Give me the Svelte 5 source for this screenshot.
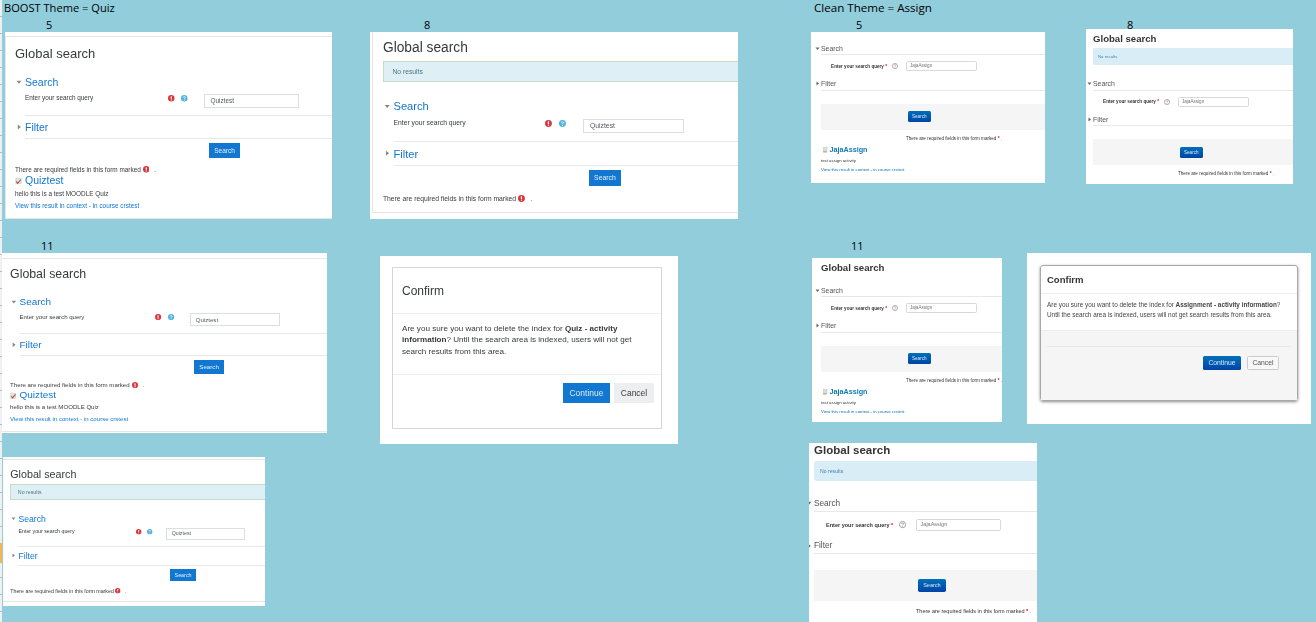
<script>
  // each pane is one pasted screenshot; z is how much it was scaled when pasted
  const notes = [
    { text: 'BOOST Theme = Quiz', x: 4, y: 0, size: 11.1 },
    { text: '5', x: 46, y: 17, size: 11 },
    { text: '8', x: 424, y: 17, size: 11 },
    { text: '11', x: 41, y: 238, size: 11 },
    { text: 'Clean Theme = Assign', x: 814, y: 0, size: 11.6 },
    { text: '5', x: 856, y: 17, size: 11 },
    { text: '8', x: 1127, y: 17, size: 11 },
    { text: '11', x: 851, y: 238, size: 11 }
  ];

  const boost = [
    { x: 5, y: 32, w: 327, h: 187, z: 1, ox: 0, top: 4, alert: false, result: true },
    { x: 370, y: 32, w: 368, h: 187, z: 1.06, ox: 2.4, top: -2, alert: true, result: false },
    { x: 2, y: 253, w: 325, h: 180, z: 0.95, ox: -1.5, top: 5.2, alert: false, result: true },
    { x: 3, y: 457, w: 262, h: 149, z: 0.825, ox: -1.2, top: 2.6, alert: true, result: false }
  ];

  const clean = [
    { x: 811, y: 32, w: 234, h: 151, z: 1, ox: 0, top: 11, title: false, alert: false, result: true },
    { x: 1086, y: 29, w: 207, h: 155, z: 1, ox: -3, top: 3, title: true, alert: true, result: false },
    { x: 812, y: 258, w: 190, h: 164, z: 1, ox: -1, top: 3, title: true, alert: false, result: true },
    { x: 809, y: 443, w: 228, h: 179, z: 1.2, ox: -7, top: -1.2, title: true, alert: true, result: false }
  ];

  const box = (p) => `left:${p.x}px;top:${p.y}px;width:${p.w}px;height:${p.h}px`;
  const scaled = (p) => `zoom:${p.z};margin-left:${p.ox / p.z}px;padding-top:${Math.max(p.top, 0)}px;margin-top:${Math.min(p.top, 0)}px`;
</script>

{#snippet caretDown(color)}
  <svg class="caret" viewBox="0 0 10 10" style="color:{color}"><path d="M1 3h8L5 8z" fill="currentColor" /></svg>
{/snippet}

{#snippet caretRight(color)}
  <svg class="caret" viewBox="0 0 10 10" style="color:{color}"><path d="M3 1v8l5-4z" fill="currentColor" /></svg>
{/snippet}

{#snippet required()}
  <svg class="ico" viewBox="0 0 12 12"><circle cx="6" cy="6" r="6" fill="#d9363e" /><rect x="4.9" y="2.2" width="2.2" height="5" rx="1" fill="#fff" /><circle cx="6" cy="9.1" r="1.1" fill="#fff" /></svg>
{/snippet}

{#snippet help()}
  <svg class="ico" viewBox="0 0 12 12"><circle cx="6" cy="6" r="6" fill="#4fb3dc" /><path d="M4 4.6C4 2.6 8 2.6 8 4.6 8 6 6 5.8 6 7.4" fill="none" stroke="#fff" stroke-width="1.5" /><circle cx="6" cy="9.3" r="1" fill="#fff" /></svg>
{/snippet}

{#snippet helpOutline()}
  <svg class="ico-clean" viewBox="0 0 12 12"><circle cx="6" cy="6" r="5.2" fill="none" stroke="#777" stroke-width="1.1" /><path d="M4.2 4.7C4.2 3 7.8 3 7.8 4.7 7.8 5.9 6 5.8 6 7.2" fill="none" stroke="#777" stroke-width="1.1" /><circle cx="6" cy="8.9" r=".8" fill="#777" /></svg>
{/snippet}

{#snippet quizIcon()}
  <svg class="quiz-ico" viewBox="0 0 12 12"><rect x="1.5" y="1" width="9" height="10" fill="#dbe4ee" stroke="#aab6c4" stroke-width=".6" /><path d="M2 6.5l2.6 3.4L10 3.4" fill="none" stroke="#c9502a" stroke-width="1.9" /></svg>
{/snippet}

{#snippet assignIcon()}
  <svg class="assign-ico" viewBox="0 0 12 12"><rect x="3" y="1" width="7" height="7.5" fill="#d6dfe8" stroke="#9fb0c0" stroke-width=".7" /><path d="M1.5 8.5h8.6l-.9 2.7H2.6z" fill="#d8a05c" /></svg>
{/snippet}

<div class="canvas">
  <div class="gutter"></div>
  <div class="gutter-mark"></div>

  {#each notes as n}
    <span class="note" style="left:{n.x}px;top:{n.y}px;font-size:{n.size}px">{n.text}</span>
  {/each}

  {#each boost as p}
    <div class="pane" style={box(p)}>
      <div class="page boost" style={scaled(p)}>
        <div class="card">
          <h2>Global search</h2>
          {#if p.alert}
            <div class="alert">No results</div>
          {/if}
          <div class="legend" class:after-alert={p.alert}>
            {@render caretDown('#888')}
            <span>Search</span>
          </div>
          <div class="fields">
            <span class="label">Enter your search query</span>
            <span class="icons">{@render required()}{@render help()}</span>
            <span class="input">Quiztest</span>
          </div>
          <div class="legend second">
            {@render caretRight('#888')}
            <span>Filter</span>
          </div>
          <div class="rule"></div>
          <div class="actions"><span class="btn">Search</span></div>
          <div class="marked">There are required fields in this form marked {@render required()} <i>.</i></div>
          {#if p.result}
            <div class="result">{@render quizIcon()}<span>Quiztest</span></div>
            <div class="desc">hello this is a test MOODLE Quiz</div>
            <div class="ctx">View this result in context - in course crstest</div>
          {/if}
        </div>
      </div>
    </div>
  {/each}

  {#each clean as p}
    <div class="pane" style={box(p)}>
      <div class="page clean" style={scaled(p)}>
        {#if p.title}
          <h2>Global search</h2>
        {/if}
        {#if p.alert}
          <div class="alert">No results</div>
        {/if}
        <div class="legend" class:after-title={p.title && !p.alert} class:after-alert={p.alert}>
          {@render caretDown('#666')}
          <span>Search</span>
        </div>
        <div class="fields">
          <span class="label">Enter your search query <b>*</b></span>
          {@render helpOutline()}
          <span class="input">JajaAssign</span>
        </div>
        <div class="legend second">
          {@render caretRight('#666')}
          <span>Filter</span>
        </div>
        <div class="rule"></div>
        <div class="actions"><span class="btn">Search</span></div>
        <div class="marked">There are required fields in this form marked <b>*</b> .</div>
        {#if p.result}
          <div class="result">{@render assignIcon()}<span>JajaAssign</span></div>
          <div class="desc">test assign activity</div>
          <div class="ctx">View this result in context - in course crstest</div>
        {/if}
      </div>
    </div>
  {/each}

  <div class="pane confirm-boost">
    <div class="dialog">
      <h3>Confirm</h3>
      <p>Are you sure you want to delete the index for <b>Quiz - activity information</b>? Until the search area is indexed, users will not get search results from this area.</p>
      <div class="foot">
        <span class="go">Continue</span>
        <span class="no">Cancel</span>
      </div>
    </div>
  </div>

  <div class="pane confirm-clean">
    <div class="dialog">
      <h3>Confirm</h3>
      <p>Are you sure you want to delete the index for <b>Assignment - activity information</b>? Until the search area is indexed, users will not get search results from this area.</p>
      <div class="foot">
        <div class="foot-row">
          <span class="go">Continue</span>
          <span class="no">Cancel</span>
        </div>
      </div>
    </div>
  </div>
</div>

<style>
  :global(body) {
    margin: 0;
    background: #92cddc;
  }

  .canvas {
    position: relative;
    width: 1316px;
    height: 622px;
    overflow: hidden;
    background: #92cddc;
    font-family: "Liberation Sans", Arial, sans-serif;
  }

  .gutter {
    position: absolute;
    left: 0;
    top: 0;
    bottom: 0;
    width: 1.5px;
    background: repeating-linear-gradient(#eef0f2 0 16px, #b8bcc0 16px 17px);
  }

  .gutter-mark {
    position: absolute;
    left: 0;
    top: 543px;
    width: 1.5px;
    height: 20px;
    background: #f2b84b;
  }

  .note {
    position: absolute;
    font-family: "Open Sans", "Noto Sans", sans-serif;
    line-height: 16px;
    color: #000;
    white-space: nowrap;
  }

  .pane {
    position: absolute;
    overflow: hidden;
    background: #fff;
  }

  .page,
  .dialog {
    filter: blur(0.4px);
  }

  .page {
    width: 560px;
  }

  /* boost screenshots */
  .boost {
    color: #373a3c;
  }

  .card {
    box-sizing: border-box;
    padding: 9px 0 8px 9px;
    border: 1px solid #e6e6e6;
    border-width: 1.5px 0 1.5px 1px;
  }

  .boost h2 {
    margin: 0;
    font-size: 13px;
    font-weight: 400;
    line-height: 16px;
  }

  .boost .alert {
    box-sizing: border-box;
    height: 20px;
    margin-top: 3.4px;
    padding-left: 8px;
    border: 1px solid #c6dcc4;
    background: #def0f6;
    font-size: 6.4px;
    line-height: 18px;
    color: #4e7482;
  }

  .boost .legend {
    display: flex;
    align-items: center;
    height: 12px;
    margin-top: 14px;
    font-size: 10.5px;
    color: #1177d1;
  }

  .boost .legend.after-alert {
    margin-top: 16.4px;
  }

  .boost .legend.second {
    margin-top: 5px;
  }

  .caret {
    flex: none;
    width: 6px;
    height: 6px;
  }

  .boost .caret {
    margin: 0 3px 0 1px;
  }

  .boost .fields {
    display: flex;
    align-items: flex-start;
    margin: 6px 0 0 10px;
    padding-bottom: 7px;
    border-bottom: 1px solid #e8e8e8;
    font-size: 6.4px;
  }

  .boost .label {
    width: 143px;
    line-height: 8px;
  }

  .icons {
    display: flex;
    gap: 6.5px;
    width: 36px;
    margin-top: 1px;
  }

  .ico {
    width: 6.5px;
    height: 6.5px;
  }

  .boost .input {
    box-sizing: border-box;
    width: 95px;
    height: 14px;
    padding-left: 5.5px;
    border: 1px solid #dcdfe2;
    line-height: 12px;
    color: #55595c;
  }

  .boost .rule {
    height: 1px;
    margin: 5px 0 0 10px;
    background: #e8e8e8;
  }

  .boost .actions {
    margin: 4px 0 0 194px;
  }

  .boost .btn {
    display: block;
    width: 31px;
    height: 15px;
    background: #1177d1;
    color: #e6f1fb;
    font-size: 6.5px;
    line-height: 15px;
    text-align: center;
  }

  .boost .marked {
    display: flex;
    align-items: center;
    gap: 2px;
    height: 9px;
    margin-top: 7px;
    font-size: 6.4px;
  }

  .marked i {
    margin-left: 3px;
    font-style: normal;
  }

  .boost .result {
    display: flex;
    align-items: center;
    height: 12px;
    font-size: 10.5px;
    color: #1177d1;
  }

  .quiz-ico {
    width: 7px;
    height: 8px;
    margin: 2px 3px 0 0;
  }

  .boost .desc,
  .boost .ctx {
    height: 9px;
    margin-top: 3px;
    font-size: 6.4px;
    line-height: 9px;
  }

  .boost .ctx {
    color: #1177d1;
  }

  /* clean screenshots */
  .clean {
    color: #333;
  }

  .clean h2 {
    margin: 0 0 0 10px;
    font-size: 9.6px;
    font-weight: 700;
    line-height: 14px;
  }

  .clean .alert {
    box-sizing: border-box;
    height: 17px;
    margin: 2px 0 0 10px;
    padding-left: 5px;
    border-radius: 2px;
    background: #d9edf7;
    font-size: 4.3px;
    line-height: 17px;
    color: #3a87ad;
  }

  .clean .legend {
    display: flex;
    align-items: center;
    box-sizing: content-box;
    height: 10px;
    font-size: 6.9px;
    color: #555;
    padding-bottom: 2px;
    position: relative;
  }

  .clean .legend::after {
    content: "";
    position: absolute;
    left: 10px;
    right: 0;
    bottom: 0;
    height: 1px;
    background: #e8e8e8;
  }

  .clean .legend.after-title {
    margin-top: 10px;
  }

  .clean .legend.after-alert {
    margin-top: 13.5px;
  }

  .clean .legend.second {
    margin-top: 7.5px;
  }

  .clean .caret {
    width: 5px;
    height: 5px;
    margin: 0 0 0 3.5px;
    padding-right: 1.5px;
  }

  .clean .fields {
    display: flex;
    align-items: center;
    margin-top: 6px;
    height: 10px;
    font-size: 4.6px;
  }

  .clean .label {
    width: 66px;
    margin-left: 10px;
    font-weight: 700;
    text-align: right;
    white-space: nowrap;
  }

  .clean b {
    color: #e00;
  }

  .ico-clean {
    width: 6px;
    height: 6px;
    margin: 0 8px 0 5px;
  }

  .clean .input {
    box-sizing: border-box;
    width: 71px;
    height: 10px;
    padding-left: 3px;
    border: 1px solid #d8d8d8;
    border-radius: 1.5px;
    line-height: 8px;
    color: #777;
  }

  .clean .rule {
    display: none;
  }

  .clean .actions {
    display: flex;
    align-items: center;
    height: 26px;
    margin: 13px 0 0 10px;
    padding-left: 86.5px;
    background: #f5f5f5;
  }

  .clean .btn {
    width: 23.5px;
    height: 11px;
    border-radius: 1.5px;
    background: linear-gradient(#0070b8, #0044a8);
    color: #dbe8f5;
    font-size: 4.6px;
    line-height: 11px;
    text-align: center;
  }

  .clean .marked {
    height: 6px;
    margin: 6px 0 0 95px;
    font-size: 4.6px;
    line-height: 6px;
    white-space: nowrap;
  }

  .clean .result {
    display: flex;
    align-items: center;
    height: 9px;
    margin: 3.5px 0 0 11px;
    font-size: 7.2px;
    font-weight: 700;
    color: #0f7ab5;
  }

  .assign-ico {
    width: 6px;
    height: 6px;
    margin-right: 1.5px;
  }

  .clean .desc,
  .clean .ctx {
    height: 6px;
    margin: 4px 0 0 10px;
    font-size: 4.3px;
    line-height: 6px;
  }

  .clean .ctx {
    margin-top: 3px;
    color: #0070a8;
  }

  /* confirm dialogs */
  .confirm-boost {
    left: 380px;
    top: 256px;
    width: 298px;
    height: 188px;
  }

  .confirm-boost .dialog {
    box-sizing: border-box;
    width: 270px;
    height: 162px;
    margin: 11px 0 0 12px;
    border: 1px solid #d6d6d6;
    color: #373a3c;
  }

  .confirm-boost h3 {
    height: 45px;
    margin: 0;
    padding-left: 9px;
    border-bottom: 1px solid #eceeef;
    font-size: 12px;
    font-weight: 400;
    line-height: 47px;
  }

  .confirm-boost p {
    box-sizing: border-box;
    height: 61px;
    margin: 0;
    padding: 8.5px 9px 0;
    border-bottom: 1px solid #eceeef;
    font-size: 8.1px;
    line-height: 11.5px;
  }

  .confirm-boost .foot {
    display: flex;
    justify-content: flex-end;
    gap: 4px;
    padding: 8px 7px 0 0;
    font-size: 8.5px;
    line-height: 20px;
    text-align: center;
  }

  .confirm-boost .go {
    width: 47px;
    background: #1177d1;
    color: #dcebf9;
  }

  .confirm-boost .no {
    width: 40px;
    background: #eceeef;
  }

  .confirm-clean {
    left: 1027px;
    top: 253px;
    width: 284px;
    height: 171px;
  }

  .confirm-clean .dialog {
    display: flex;
    flex-direction: column;
    box-sizing: border-box;
    width: 258px;
    height: 136px;
    margin: 12px 0 0 13px;
    border: 1px solid #a8a8a8;
    border-radius: 3px;
    box-shadow: 0 1px 3px rgba(0, 0, 0, 0.45);
    color: #444;
  }

  .confirm-clean h3 {
    height: 27px;
    margin: 0;
    padding-left: 6px;
    border-bottom: 1px solid #eee;
    font-size: 9.5px;
    line-height: 27px;
    color: #333;
  }

  .confirm-clean p {
    height: 36px;
    margin: 0;
    padding: 6px 12px 0 6px;
    box-sizing: border-box;
    font-size: 6.4px;
    line-height: 9.5px;
  }

  .confirm-clean .foot {
    flex: 1;
    padding: 15px 6px 0;
    border-top: 1px solid #eee;
    background: #f5f5f5;
  }

  .confirm-clean .foot-row {
    display: flex;
    justify-content: flex-end;
    gap: 6px;
    padding: 9px 12px 0 0;
    border-top: 1px solid #e8e8e8;
    font-size: 6.8px;
    line-height: 14px;
    text-align: center;
  }

  .confirm-clean .go {
    width: 38px;
    border-radius: 1.5px;
    background: linear-gradient(#0070b8, #0044a8);
    color: #dbe8f5;
  }

  .confirm-clean .no {
    box-sizing: border-box;
    width: 32px;
    border: 1px solid #ccc;
    border-radius: 1.5px;
    background: #f8f8f8;
    line-height: 12px;
    color: #555;
  }
</style>
